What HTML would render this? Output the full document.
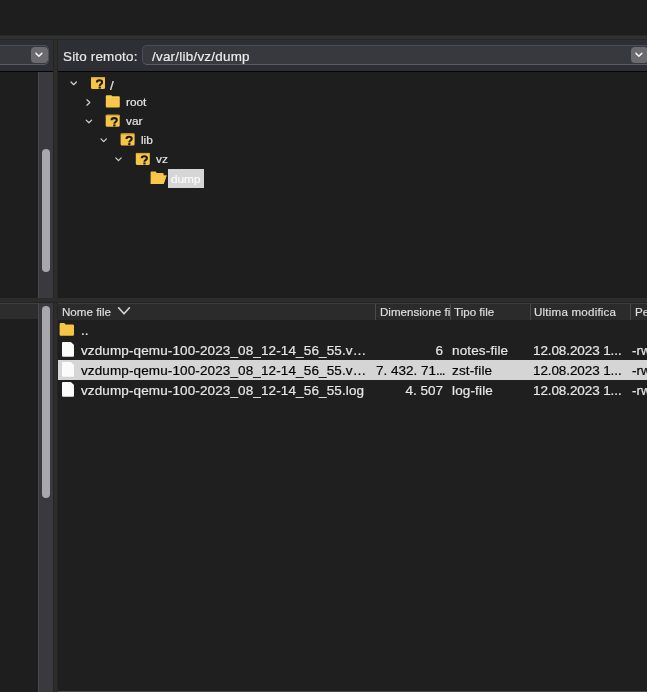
<!DOCTYPE html>
<html><head><meta charset="utf-8">
<style>
*{margin:0;padding:0;box-sizing:border-box}
html,body{width:647px;height:692px;overflow:hidden;background:#1e1e1e;font-family:"Liberation Sans",sans-serif;position:relative}
.a{position:absolute}
.t{position:absolute;white-space:nowrap;color:#e6e6e6;line-height:1;will-change:transform;-webkit-text-stroke:0.2px currentColor}
svg{position:absolute;overflow:visible}
.tr{font-size:11.8px;color:#e6e6e6}
.hd{font-size:11.6px;color:#dedede}
.rw{font-size:13.5px;color:#e6e6e6}
.sel{color:#050505}
</style></head><body>
<!-- top band -->
<div class="a" style="left:0;top:35px;width:647px;height:1px;background:#282828"></div><div class="a" style="left:0;top:36px;width:647px;height:3px;background:#323232"></div><div class="a" style="left:0;top:39px;width:647px;height:1px;background:#262626"></div>
<!-- header left -->
<div class="a" style="left:0;top:40px;width:53px;height:31px;background:#2d2f34"></div>
<div class="a" style="left:-10px;top:45px;width:59px;height:20px;background:#38393e;border:1px solid #4c4d55;border-bottom-color:#5c5c60;border-radius:5px"></div>
<div class="a" style="left:31px;top:47px;width:17px;height:16px;background:#6b6b6e;border-radius:4px"></div>
<svg style="left:31px;top:47px" width="17" height="16"><path d="M5 6.4 L7.9 9.3 L10.8 6.4" fill="none" stroke="#f4f4f4" stroke-width="1.5" stroke-linecap="round" stroke-linejoin="round"/></svg>
<!-- header right -->
<div class="a" style="left:58px;top:40px;width:589px;height:31px;background:#2d2f34"></div>
<div class="t" style="left:63px;top:50px;font-size:13.4px;color:#e8e8e8;letter-spacing:0.2px">Sito remoto:</div>
<div class="a" style="left:142px;top:45px;width:515px;height:20px;background:#38393e;border:1px solid #4c4d55;border-bottom-color:#5c5c60;border-radius:5px"></div>
<div class="t" style="left:152px;top:50px;font-size:13.4px;color:#ececec;letter-spacing:0.25px">/var/lib/vz/dump</div>
<div class="a" style="left:631px;top:47px;width:17px;height:16px;background:#6b6b6e;border-radius:4px"></div>
<svg style="left:631px;top:47px" width="17" height="16"><path d="M5 6.4 L7.9 9.3 L10.8 6.4" fill="none" stroke="#f4f4f4" stroke-width="1.5" stroke-linecap="round" stroke-linejoin="round"/></svg>
<!-- header bottom black line -->
<div class="a" style="left:0;top:71px;width:53px;height:1px;background:#050505"></div>
<div class="a" style="left:58px;top:71px;width:589px;height:1px;background:#050505"></div>
<!-- vertical splitter -->
<div class="a" style="left:53px;top:40px;width:5px;height:652px;background:#2d2d2c;border-left:1px solid #242424;border-right:1px solid #242424"></div>

<!-- top content left -->
<div class="a" style="left:0;top:72px;width:38px;height:226px;background:#1e1e1e"></div>
<div class="a" style="left:38px;top:72px;width:15px;height:226px;background:#39393e;border-left:1px solid #47474c"></div>
<div class="a" style="left:42px;top:149px;width:8px;height:123px;background:#a8a8ac;border-radius:4px"></div>
<!-- top content right -->
<div class="a" style="left:58px;top:72px;width:589px;height:226px;background:#1e1e1e"></div>

<!-- tree -->
<svg style="left:0;top:0" width="647" height="300">
 <defs>
  <g id="q">
   <rect x="0" y="0" width="14" height="12" rx="1.5" fill="#f5c546"/>
   <rect x="0" y="0" width="14" height="1.2" fill="#d9a236"/>
   <path d="M5.9 5.4 Q5.9 3.3 8.5 3.3 Q11.1 3.3 11.1 5.3 Q11.1 6.5 9.9 7.1 Q8.7 7.7 8.7 8.9" fill="none" stroke="#1c1a14" stroke-width="2.1"/>
   <rect x="7.6" y="9.6" width="2.2" height="2" fill="#1c1a14"/>
  </g>
  <g id="f">
   <path d="M0 1 Q0 0 1 0 L5.6 0 L6.6 1 L13 1 Q14 1 14 2 L14 11.3 Q14 12.3 13 12.3 L1 12.3 Q0 12.3 0 11.3 Z" fill="#f6c748"/>
   <rect x="0.5" y="1.6" width="13" height="0.7" fill="#fbd870" opacity="0.7"/>
  </g>
 </defs>
 <g fill="none" stroke="#d0d0d0" stroke-width="1.25" stroke-linecap="round" stroke-linejoin="round">
  <path d="M71 82 L73.7 84.7 L76.4 82"/>
  <path d="M86.9 99.8 L89.8 102.5 L86.9 105.2"/>
  <path d="M86.2 120.1 L88.9 122.8 L91.6 120.1"/>
  <path d="M101 138.9 L103.7 141.6 L106.4 138.9"/>
  <path d="M115.8 157.9 L118.5 160.6 L121.2 157.9"/>
 </g>
 <use href="#q" x="91" y="77"/>
 <use href="#f" x="105.8" y="95.3"/>
 <use href="#q" x="105.7" y="114.8"/>
 <use href="#q" x="120.6" y="133.5"/>
 <use href="#q" x="135.8" y="152.9"/>
 <!-- open folder -->
 <path d="M150.6 172.6 Q150.6 171.5 151.7 171.5 L155.6 171.5 L156.8 173 L162.6 173 Q163.7 173 163.7 174 L163.7 175.4 L166.6 175.4 L163.6 184.1 L151.6 184.1 Q150.6 184.1 150.6 183 Z" fill="#f5c546"/>
 <path d="M152.6 175.4 L166.6 175.4 L163.6 184.1 L150.6 184.1 Z" fill="#f7c84c"/>
</svg>
<div class="t tr" style="left:110.3px;top:78.5px;font-size:13.5px">/</div>
<div class="t tr" style="left:126px;top:97.3px">root</div>
<div class="t tr" style="left:126px;top:116.3px">var</div>
<div class="t tr" style="left:141px;top:135.3px">lib</div>
<div class="t tr" style="left:155.5px;top:154.3px">vz</div>
<div class="a" style="left:168px;top:169px;width:36px;height:19px;background:#d6d6d6"></div>
<div class="t tr" style="left:171px;top:173.5px;color:#fafafa">dump</div>

<!-- horizontal splitter -->
<div class="a" style="left:0;top:298px;width:647px;height:5px;background:#2c2c2c;border-bottom:1px solid #242424"></div>

<!-- bottom left -->
<div class="a" style="left:0;top:303px;width:38px;height:389px;background:#1e1e1e"></div>
<div class="a" style="left:0;top:303px;width:38px;height:16px;background:#2d2d2d;border-top:1px solid #3e3e3e"></div>
<div class="a" style="left:38px;top:303px;width:15px;height:389px;background:#39393e;border-left:1px solid #47474c"></div>
<div class="a" style="left:42px;top:306px;width:8px;height:192px;background:#a8a8ac;border-radius:4px"></div>

<!-- bottom right -->
<div class="a" style="left:58px;top:303px;width:589px;height:389px;background:#1f1f1f"></div>
<div class="a" style="left:58px;top:303px;width:589px;height:17px;background:#2b2b2b;border-top:1px solid #3c3c3c"></div>
<div class="a" style="left:375px;top:304px;width:1px;height:16px;background:#4a4a4a"></div>
<div class="a" style="left:450px;top:304px;width:1px;height:16px;background:#4a4a4a"></div>
<div class="a" style="left:530px;top:304px;width:1px;height:16px;background:#4a4a4a"></div>
<div class="a" style="left:630px;top:304px;width:1px;height:16px;background:#4a4a4a"></div>
<div class="t hd" style="left:62px;top:306px">Nome file</div>
<svg style="left:0;top:0" width="647" height="330"><path d="M118.6 307.8 L124 313.8 L129.4 307.8" fill="none" stroke="#d2d2d2" stroke-width="1.7" stroke-linecap="round" stroke-linejoin="round"/></svg>
<div class="a" style="left:376px;top:304px;width:74px;height:16px;overflow:hidden"><div class="t hd" style="left:3.5px;top:2px">Dimensione file</div></div>
<div class="t hd" style="left:454px;top:306px">Tipo file</div>
<div class="t hd" style="left:534px;top:306px;letter-spacing:0.2px">Ultima modifica</div>
<div class="t hd" style="left:635px;top:306px">Permessi</div>

<!-- rows -->
<div class="a" style="left:58px;top:360px;width:589px;height:20px;background:#d5d5d5"></div>
<svg style="left:0;top:0" width="647" height="420">
 <path d="M59.6 324.3 Q59.6 323.1 60.8 323.1 L64.3 323.1 L65.6 324.6 L72.8 324.6 Q74 324.6 74 325.8 L74 334.6 Q74 335.8 72.8 335.8 L60.8 335.8 Q59.6 335.8 59.6 334.6 Z" fill="#f5c546"/>
 <g id="pg"><path d="M62 343 Q62 342 63 342 L70.9 342 L74 345.1 L74 355.7 Q74 356.7 73 356.7 L63 356.7 Q62 356.7 62 355.7 Z" fill="#fbfbfb"/></g>
 <path d="M62 363 Q62 362 63 362 L70.9 362 L74 365.1 L74 375.7 Q74 376.7 73 376.7 L63 376.7 Q62 376.7 62 375.7 Z" fill="#fbfbfb"/>
 <path d="M62 383 Q62 382 63 382 L70.9 382 L74 385.1 L74 395.7 Q74 396.7 73 396.7 L63 396.7 Q62 396.7 62 395.7 Z" fill="#fbfbfb"/>
</svg>
<div class="t rw" style="left:80.8px;top:323.5px">..</div>
<div class="t rw" style="left:81px;top:343.5px;letter-spacing:0.12px">vzdump-qemu-100-2023_08_12-14_56_55.v…</div>
<div class="t rw sel" style="left:81px;top:363.5px;letter-spacing:0.12px">vzdump-qemu-100-2023_08_12-14_56_55.v…</div>
<div class="t rw" style="left:81px;top:383.5px;letter-spacing:0.12px">vzdump-qemu-100-2023_08_12-14_56_55.log</div>

<div class="t rw" style="left:376px;width:67px;text-align:right;top:343.5px">6</div>
<div class="t rw sel" style="left:376px;width:67.5px;text-align:right;top:363.5px">7. 432. 71<span style="letter-spacing:-0.9px">...</span></div>
<div class="t rw" style="left:376px;width:67px;text-align:right;top:383.5px">4. 507</div>

<div class="t rw" style="left:452px;top:343.5px;letter-spacing:0.15px">notes-file</div>
<div class="t rw sel" style="left:452px;top:363.5px;letter-spacing:0.15px">zst-file</div>
<div class="t rw" style="left:452px;top:383.5px;letter-spacing:0.15px">log-file</div>

<div class="t rw" style="letter-spacing:-0.1px;left:533px;top:343.5px">12.08.2023 1...</div>
<div class="t rw sel" style="letter-spacing:-0.1px;left:533px;top:363.5px">12.08.2023 1...</div>
<div class="t rw" style="letter-spacing:-0.1px;left:533px;top:383.5px">12.08.2023 1...</div>

<div class="t rw" style="left:632px;top:343.5px">-rw</div>
<div class="t rw sel" style="left:632px;top:363.5px">-rw</div>
<div class="t rw" style="left:632px;top:383.5px">-rw</div>

<div class="a" style="left:58px;top:691px;width:589px;height:1px;background:#4a4a4a"></div>
</body></html>
